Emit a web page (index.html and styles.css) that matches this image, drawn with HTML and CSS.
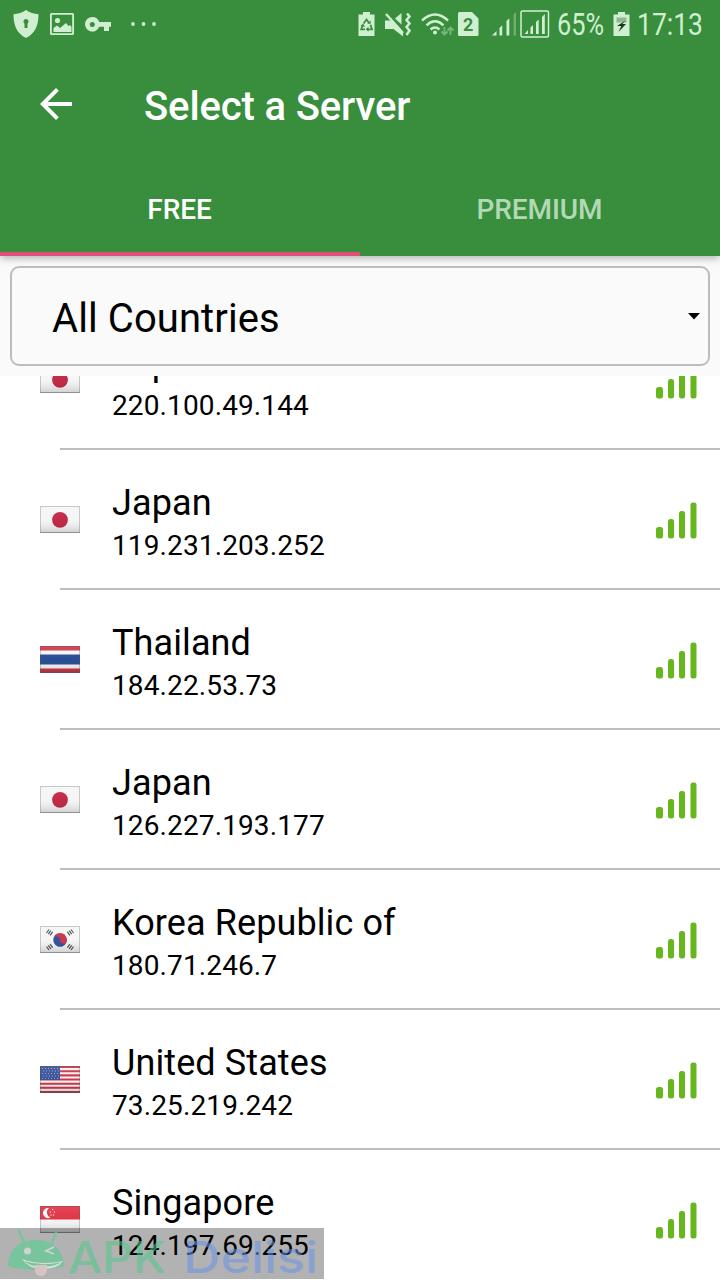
FILE: index.html
```html
<!DOCTYPE html>
<html lang="en">
<head>
	<title>Select a Server</title>
	<meta charset="utf-8"/>
	<link rel="stylesheet" href="styles.css">
</head>
<body>

	<!-- shared flags and icons -->
	<svg class="defs" width="0" height="0">
		<defs>
			<linearGradient id="shine" x1="0" y1="0" x2="0" y2="1">
				<stop offset="0" stop-color="#fff" stop-opacity=".15"/>
				<stop offset=".5" stop-color="#fff" stop-opacity=".08"/>
				<stop offset="1" stop-color="#333" stop-opacity=".2"/>
			</linearGradient>
		</defs>
		<symbol id="gloss" viewBox="0 0 40 27">
			<rect width="40" height="27" fill="url(#shine)"/>
			<rect x=".5" y=".5" width="39" height="26" fill="none" stroke="#555" stroke-opacity=".28"/>
			<path d="M0 26.5h40" stroke="#555" stroke-opacity=".35"/>
		</symbol>
		<symbol id="japan" viewBox="0 0 40 27">
			<rect width="40" height="27" fill="#f5f5f5"/>
			<circle cx="20" cy="13.8" r="7.9" fill="#bd1737"/>
			<use href="#gloss"/>
		</symbol>
		<symbol id="thailand" viewBox="0 0 40 27">
			<rect width="40" height="27" fill="#c62b3d"/>
			<rect y="4.5" width="40" height="18" fill="#f4f4f4"/>
			<rect y="8.5" width="40" height="10" fill="#173f8c"/>
			<use href="#gloss"/>
		</symbol>
		<symbol id="korea" viewBox="0 0 40 27">
			<rect width="40" height="27" fill="#f5f5f5"/>
			<g transform="rotate(20 20 14)">
				<circle cx="20" cy="14" r="6.8" fill="#1f4795"/>
				<path d="M13.2 14a6.8 6.8 0 0 1 13.6 0a3.4 2.4 0 0 1-6.800 0a3.400 2.400 0 0 0-6.800 0z" fill="#c9253c"/>
			</g>
			<g stroke="#444" stroke-width="1.2">
				<path d="M6.500 7l2.500-3.500M8.300 8.200l2.500-3.500M10.100 9.400l2.500-3.500"/>
				<path d="M33.500 7l-2.500-3.500M31.700 8.200l-2.500-3.500M29.900 9.400l-2.500-3.500"/>
				<path d="M6.500 20.500l2.500 3.500M8.300 19.300l2.500 3.500M10.100 18.100l2.500 3.500"/>
				<path d="M33.500 20.500l-2.500 3.500M31.700 19.300l-2.500 3.500M29.900 18.100l-2.500 3.500"/>
			</g>
			<use href="#gloss"/>
		</symbol>
		<symbol id="usa" viewBox="0 0 40 27">
			<rect width="40" height="27" fill="#f5f0f0"/>
			<path d="M0 1h40M0 5.2h40M0 9.4h40M0 13.5h40M0 17.7h40M0 21.8h40M0 26h40" stroke="#c3283c" stroke-width="2.1"/>
			<rect width="20" height="14" fill="#294490"/>
			<path d="M2 2.5h17M3 5h16M2 7.5h17M3 10h16M2 12.3h17" stroke="#8f9cc8" stroke-width="1" stroke-dasharray="1 2"/>
			<use href="#gloss"/>
		</symbol>
		<symbol id="singapore" viewBox="0 0 40 27">
			<rect width="40" height="27" fill="#f5f5f5"/>
			<rect width="40" height="13.5" fill="#de2538"/>
			<path d="M9 2.200a5 5 0 1 0 1.500 9.200a5.200 5.200 0 0 1-1.500-9.200z" fill="#fff"/>
			<path d="M12 3.500h1.200M9.800 6h1.200M13.800 6h1.200M10.500 9h1.200M13 9h1.200" stroke="#fff" stroke-width="1.1"/>
			<use href="#gloss"/>
		</symbol>
		<symbol id="signal" viewBox="0 0 42 37">
			<g fill="#66b61d">
				<rect x="0" y="25" width="7" height="11.5" rx="2.5"/>
				<rect x="12" y="17" width="6" height="19.5" rx="2.5"/>
				<rect x="23" y="9" width="6" height="27.5" rx="2.5"/>
				<rect x="34.5" y=".5" width="6" height="36" rx="2.5"/>
			</g>
		</symbol>
	</svg>

	<div class="header">
		<div class="status">
			<svg class="shield" width="26" height="28" viewBox="0 0 26 28">
				<path d="M13 0C9.500 2.500 5 4 .5 4.200C.5 14 3 23 13 28C23 23 25.500 14 25.500 4.200C21 4 16.500 2.500 13 0z"/>
				<path class="dark" d="M13 9a2.600 2.600 0 0 1 1.500 4.700V18h-3v-4.300A2.600 2.600 0 0 1 13 9z"/>
			</svg>
			<svg class="picture" width="24" height="22" viewBox="0 0 24 22">
				<path fill-rule="evenodd" d="M1.500 0h21A1.500 1.500 0 0 1 24 1.500v19a1.500 1.500 0 0 1-1.500 1.500h-21A1.500 1.500 0 0 1 0 20.500v-19A1.500 1.500 0 0 1 1.500 0zM1.800 1.800v18.400h20.400V1.800z"/>
				<circle cx="7.500" cy="7.500" r="2.600"/>
				<path d="M3.500 15l3.500-2.500 3 2.500 6-5 2.500 3 1.500-1 1.500 2v5h-18z"/>
			</svg>
			<svg class="key" width="26" height="15" viewBox="0 0 26 15">
				<path fill-rule="evenodd" d="M7.300 0a7.300 7.300 0 0 1 6.900 5H26v4.800h-2V14h-5V9.800h-4.800A7.300 7.300 0 1 1 7.300 0zM7.300 5a2.500 2.500 0 1 0 0 5a2.500 2.500 0 0 0 0-5z"/>
			</svg>
			<svg class="dots" width="26" height="4" viewBox="0 0 26 4">
				<circle cx="2" cy="2" r="1.900"/><circle cx="12.500" cy="2" r="1.900"/><circle cx="23" cy="2" r="1.900"/>
			</svg>

			<svg class="saver" width="17" height="24" viewBox="0 0 17 24">
				<path d="M5 0h7v2.500h4.500V24H.5V2.500H5z"/>
				<path class="line" d="M5.600 11.500L8.500 7.500l2.600 3.500M12.500 12.800l1.500 4.500h-4.500M7 17.300H3.200L4.800 13"/>
				<path class="dark" d="M9.300 11.800h3.400V8.600zM10.500 14.800v5l-2.800-2.500zM2.500 14l2.600-2.600L7 15z"/>
			</svg>
			<svg class="mute" width="28" height="25" viewBox="0 0 28 25">
				<path d="M1 8.500h6L19 20.500V24.500L9.500 17H1z"/>
				<path d="M11 6.500L17.500 1v11.500z"/>
				<path class="pale" d="M2 2L19 21"/>
				<path class="pale" d="M23 1.500l2.500 3-3 3.500 3 3.500-3 3.500 3 3.500-3 4.500"/>
			</svg>
			<svg class="wifi" width="33" height="25" viewBox="0 0 33 25">
				<path class="pale" d="M1 8.500q13-12 26 0M5.500 13.300q8.500-8 17 0M9.500 17.500q4.500-4 9 0"/>
				<circle cx="14" cy="20.500" r="2"/>
				<path class="faint" d="M23.500 15v7M20.500 19.500l3 3 3-3M29.500 23v-7M26.500 18.500l3-3 3 3"/>
			</svg>
			<svg class="sim" width="21" height="24" viewBox="0 0 21 24">
				<path d="M1.500 0H14l6.500 6.500V22.500a1.500 1.500 0 0 1-1.500 1.500H1.500A1.500 1.500 0 0 1 0 22.500v-21A1.500 1.500 0 0 1 1.500 0z"/>
				<text class="num" x="10.200" y="18.800" text-anchor="middle">2</text>
			</svg>
			<svg class="bars" width="25" height="24" viewBox="0 0 25 24">
				<path d="M0 23.500L4.500 19v4.500zM7.500 16l2.700-2.700v10.200H7.500zM14.500 9l2.800-2.800v17.300h-2.800z"/>
				<path opacity=".35" d="M21.500 2.500L24 0v23.500h-2.500z"/>
			</svg>
			<svg class="boxed" width="30" height="28" viewBox="0 0 30 28">
				<rect x="1" y="1" width="27.500" height="26" rx="1.500" fill="none" stroke="#d0efd1" stroke-width="1.500"/>
				<path d="M4.500 24l3.500-4v4zM10.500 17.500l2.500-2.500v9h-2.500zM16 12l2.700-2.500V24H16zM22 7l2.800-3v20H22z"/>
			</svg>
			<svg class="percent" width="48" height="48" viewBox="0 0 48 48">
				<text class="stat" x="0" y="35" textLength="47" lengthAdjust="spacingAndGlyphs">65%</text>
			</svg>
			<svg class="battery" width="17" height="24" viewBox="0 0 17 24">
				<path d="M5 0h7v2.500h4.500V24H.5V2.500H5z"/>
				<path d="M3.500 5.500h10v5h-10z" fill="#8fb991"/>
				<path d="M12.500 8.500L4 14h4.300L5.500 20l7.500-8H9.300z" fill="#173b19"/>
			</svg>
			<svg class="clock" width="67" height="48" viewBox="0 0 67 48">
				<text class="stat" x="0" y="35" textLength="66" lengthAdjust="spacingAndGlyphs">17:13</text>
			</svg>
		</div>

		<div class="toolbar">
			<svg class="back" width="32" height="32" viewBox="0 0 32 32">
				<path d="M32 14v4H7.700l11.100 11.200L16 32 0 16 16 0l2.800 2.800L7.700 14z" fill="#fff"/>
			</svg>
			<h1>Select a Server</h1>
		</div>

		<div class="tabs">
			<div class="tab active"><span>FREE</span></div>
			<div class="tab"><span>PREMIUM</span></div>
		</div>
	</div>

	<div class="filter">
		<div class="select">
			<span>All Countries</span>
			<svg class="caret" width="12" height="7" viewBox="0 0 12 7"><path d="M0 0h12L6 6.500z"/></svg>
		</div>
	</div>

	<div class="list">
		<div class="server first">
			<svg class="flag"><use href="#japan"/></svg>
			<div class="info">
				<p class="name">Japan</p>
				<p class="ip">220.100.49.144</p>
			</div>
			<svg class="signal"><use href="#signal"/></svg>
		</div>
		<div class="server">
			<svg class="flag"><use href="#japan"/></svg>
			<div class="info">
				<p class="name">Japan</p>
				<p class="ip">119.231.203.252</p>
			</div>
			<svg class="signal"><use href="#signal"/></svg>
		</div>
		<div class="server">
			<svg class="flag"><use href="#thailand"/></svg>
			<div class="info">
				<p class="name">Thailand</p>
				<p class="ip">184.22.53.73</p>
			</div>
			<svg class="signal"><use href="#signal"/></svg>
		</div>
		<div class="server">
			<svg class="flag"><use href="#japan"/></svg>
			<div class="info">
				<p class="name">Japan</p>
				<p class="ip">126.227.193.177</p>
			</div>
			<svg class="signal"><use href="#signal"/></svg>
		</div>
		<div class="server">
			<svg class="flag"><use href="#korea"/></svg>
			<div class="info">
				<p class="name">Korea Republic of</p>
				<p class="ip">180.71.246.7</p>
			</div>
			<svg class="signal"><use href="#signal"/></svg>
		</div>
		<div class="server">
			<svg class="flag"><use href="#usa"/></svg>
			<div class="info">
				<p class="name">United States</p>
				<p class="ip">73.25.219.242</p>
			</div>
			<svg class="signal"><use href="#signal"/></svg>
		</div>
		<div class="server">
			<svg class="flag"><use href="#singapore"/></svg>
			<div class="info">
				<p class="name">Singapore</p>
				<p class="ip">124.197.69.255</p>
			</div>
			<svg class="signal"><use href="#signal"/></svg>
		</div>
	</div>

	<div class="watermark">
		<svg width="324" height="51" viewBox="0 0 324 51">
			<g class="robot">
				<path d="M19 3l5 12M56 5l-4 10" fill="none" stroke="#72c79a" stroke-width="2.500" stroke-linecap="round"/>
				<path d="M8 38C8 21 20 12 36 12S63 21 64 38C52 43 20 43 8 38z" fill="#72c79a"/>
				<circle cx="27.500" cy="23" r="3.500" fill="#d5d5d5"/>
				<path d="M54 19l-8 4 8 3" fill="none" stroke="#d5d5d5" stroke-width="1.800"/>
				<path d="M22 31q19 7 41 2-5 8-19 8-16 0-22-10z" fill="#dedede"/>
				<path d="M24 33q19 6 37 1-6 4.500-18 4.500-13 0-19-5.500z" fill="#72c79a"/>
				<path d="M35 37h12v5a6 6 0 0 1-12 0z" fill="#dcc8c8"/>
			</g>
			<text class="apk" x="68" y="45" textLength="98" lengthAdjust="spacingAndGlyphs">APK</text>
			<text class="delisi" x="183" y="45" textLength="135" lengthAdjust="spacingAndGlyphs">Delisi</text>
		</svg>
	</div>

</body>
</html>
```
FILE: styles.css
```css
body {
    margin: 0px;
    width: 720px;
    height: 1280px;
    overflow: hidden;
    position: relative;
    display: flex;
    flex-direction: column;
    background-color: #fff;
    font-family: Roboto, "Liberation Sans", sans-serif;
    color: #000;
}
h1, p {
    margin: 0px;
}
svg {
    display: block;
    flex-shrink: 0;
}
.defs {
    position: absolute;
}

/* header */
.header {
    height: 256px;
    flex-shrink: 0;
    background-color: #388e3c;
    box-shadow: 0 2px 8px rgba(0,0,0,.3);
    position: relative;
    z-index: 1;
}
.status {
    height: 48px;
    display: flex;
    align-items: center;
    fill: #d0efd1;
}
.status .dark {
    fill: #388e3c;
}
.status .line {
    fill: none;
    stroke: #388e3c;
    stroke-width: 1.8;
}
.status .pale {
    fill: none;
    stroke: #d0efd1;
    stroke-width: 2.5;
}
.status .faint {
    fill: none;
    stroke: #78b97b;
    stroke-width: 1.8;
}
.shield {margin-left: 13px;}
.picture {margin-left: 11px;}
.key {margin-left: 11px;}
.dots {margin-left: 20px;}
.saver {margin-left: auto;}
.mute {margin-left: 9px;}
.wifi {margin-left: 9px;}
.sim {margin-left: 4px;}
.bars {margin-left: 13px;}
.boxed {margin-left: 3px;}
.percent {margin-left: 7px;}
.battery {margin-left: 8px;}
.clock {margin-left: 7px; margin-right: 16px;}
.num {
    font-size: 18px;
    font-weight: 700;
    fill: #388e3c;
}
.stat {
    font-size: 31px;
}

.toolbar {
    height: 112px;
    display: flex;
    align-items: center;
    padding-left: 40px;
}
.toolbar h1 {
    margin-left: 72px;
    padding-top: 4px;
    font-size: 40px;
    font-weight: 500;
    letter-spacing: -.13px;
    color: #fff;
}
.tabs {
    display: flex;
    height: 96px;
}
.tab {
    flex: 1;
    display: flex;
    align-items: center;
    justify-content: center;
    box-sizing: border-box;
    padding-top: 6px;
    padding-right: 1px;
    border-bottom: 4px solid transparent;
    font-size: 28px;
    font-weight: 500;
    letter-spacing: -.1px;
    color: #b3d8b5;
}
.tab.active {
    color: #fff;
    border-bottom-color: #e0507b;
}

/* country select */
.filter {
    padding: 10px;
    background-color: #fafafa;
    flex-shrink: 0;
}
.select {
    height: 100px;
    box-sizing: border-box;
    border: 2px solid #bdbdbd;
    border-radius: 9px;
    padding: 4px 8px 0 40px;
    display: flex;
    align-items: center;
    justify-content: space-between;
    font-size: 40px;
    letter-spacing: .08px;
}
.caret {
    margin-bottom: 3px;
}

/* server list, scrolled part of the way */
.list {
    flex: 1;
    min-height: 0;
    overflow: hidden;
}
.server {
    height: 140px;
    display: flex;
    align-items: center;
    box-sizing: border-box;
    padding: 0 22px 0 40px;
    background: linear-gradient(#bdbdbd, #bdbdbd) 60px 138px / 660px 2px no-repeat;
}
.server.first {
    margin-top: -66px;
}
.flag {
    width: 40px;
    height: 27px;
    margin-bottom: 1px;
}
.info {
    flex: 1;
    margin-left: 32px;
    padding-top: 6px;
}
.name {
    font-size: 36px;
    line-height: 44px;
    letter-spacing: .1px;
}
.ip {
    font-size: 28px;
    line-height: 41px;
    letter-spacing: .12px;
}
.signal {
    width: 42px;
    height: 37px;
}

.watermark {
    position: absolute;
    left: 0;
    top: 1228px;
    width: 324px;
    height: 51px;
    background-color: rgba(0,0,0,.3);
}
.robot {
    opacity: .9;
}
.apk, .delisi {
    font-family: Inter, sans-serif;
    font-size: 44px;
    font-weight: 500;
    opacity: .55;
}
.apk {fill: #4fc98a;}
.delisi {fill: #6a94e8;}
```
